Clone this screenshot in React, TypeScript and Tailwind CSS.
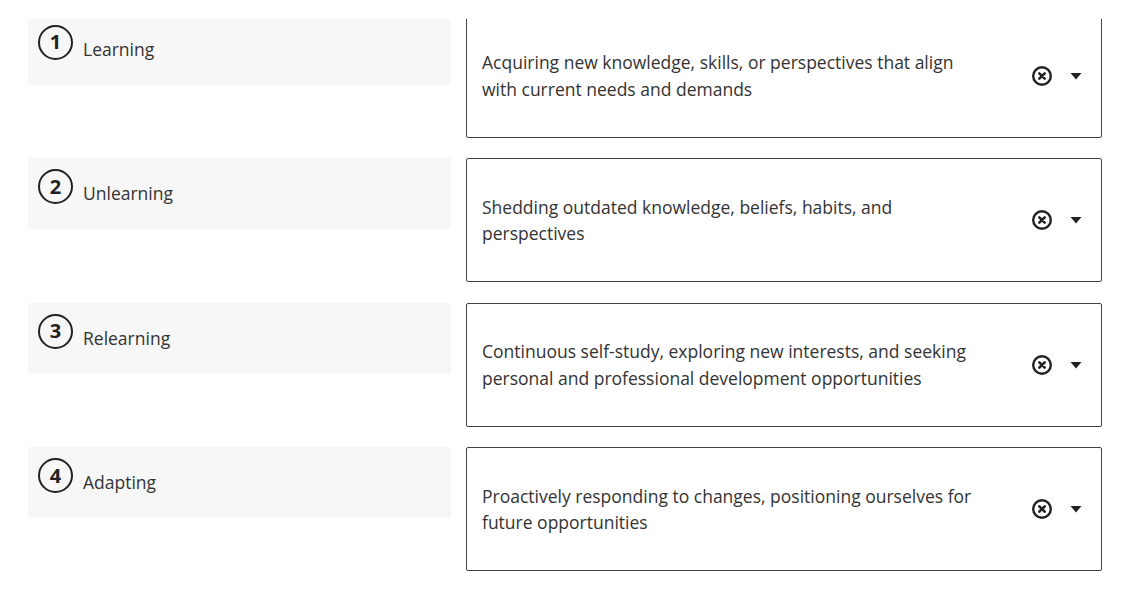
import { useState } from 'react';

type Item = { id: number; label: string; answer: string };

const items: Item[] = [
  { id: 1, label: 'Learning', answer: 'Acquiring new knowledge, skills, or perspectives that align with current needs and demands' },
  { id: 2, label: 'Unlearning', answer: 'Shedding outdated knowledge, beliefs, habits, and perspectives' },
  { id: 3, label: 'Relearning', answer: 'Continuous self-study, exploring new interests, and seeking personal and professional development opportunities' },
  { id: 4, label: 'Adapting', answer: 'Proactively responding to changes, positioning ourselves for future opportunities' },
];

function ClearIcon() {
  return (
    <svg width="22" height="22" viewBox="0 0 22 22" fill="none">
      <circle cx="11" cy="11" r="8.8" stroke="#222" strokeWidth="2.4" />
      <path d="M8.3 8.3 L13.7 13.7 M13.7 8.3 L8.3 13.7" stroke="#222" strokeWidth="2.6" strokeLinecap="round" />
    </svg>
  );
}

function Caret() {
  return (
    <svg width="14" height="10" viewBox="0 0 14 10">
      <path d="M1.5 2 L12.5 2 L7 8.5 Z" fill="#222" />
    </svg>
  );
}

function MatchRow({ item, onClear }: { item: Item; onClear: () => void }) {
  return (
    <div className="flex gap-[15px] mb-[20.5px]">
      <div className="w-[423px] h-[71px] bg-[#f7f7f7] flex items-start pt-[11px] pl-[10px] gap-[10px]">
        <div className="w-[35px] h-[35px] shrink-0 rounded-full border-2 border-[#222] flex items-center justify-center text-[20px] font-bold text-[#222] leading-none">
          {item.id}
        </div>
        <span className="mt-[11px] text-[17.5px] leading-[26px] text-[#333]">{item.label}</span>
      </div>
      <div className="w-[636px] h-[124px] border border-[#444] rounded-[2px] flex items-center pl-[15px] pr-[18px]">
        <p className="w-[500px] text-[17.5px] leading-[26.5px] text-[#333]">{item.answer}</p>
        <div className="ml-auto flex items-center gap-[16px]">
          <button onClick={onClear} className="flex">
            <ClearIcon />
          </button>
          <Caret />
        </div>
      </div>
    </div>
  );
}

export default function App() {
  const [rows, setRows] = useState(items);

  return (
    <div className="w-[1132px] h-[608px] bg-white pt-[19px]" style={{ fontFamily: '"Open Sans", "Liberation Sans", sans-serif' }}>
      <div className="h-[589px] overflow-hidden">
        <div className="-mt-[5.5px] pl-[28px]">
          {rows.map((item) => (
            <MatchRow key={item.id} item={item} onClear={() => setRows(rows.map((r) => (r.id === item.id ? { ...r } : r)))} />
          ))}
        </div>
      </div>
    </div>
  );
}
